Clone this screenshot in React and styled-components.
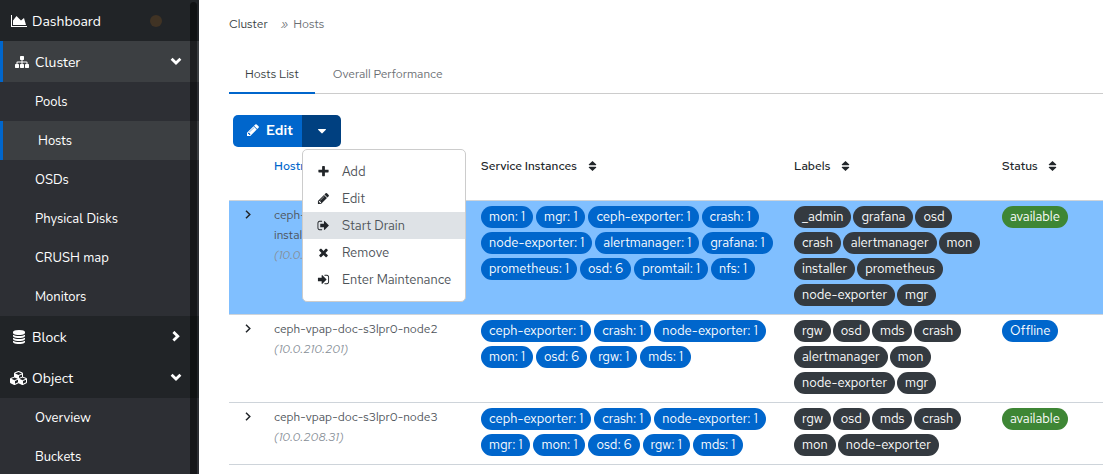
import styled, { createGlobalStyle } from 'styled-components';

const GlobalStyle = createGlobalStyle`
  * {
    box-sizing: border-box;
  }

  body {
    margin: 0;
    background: #fff;
    color: #212529;
    font-family: 'Red Hat Text', Lato, 'Open Sans', sans-serif;
    font-size: 13px;
    line-height: 20px;
    overflow: hidden;
  }

  button {
    border: 0;
    padding: 0;
    background: none;
    color: inherit;
    font: inherit;
    cursor: pointer;
  }

  a {
    color: inherit;
    text-decoration: none;
  }
`;

const icons = {
  area: [2048, 'M2048 1536v128H0V128h128v1408h1920zm-384-1024l256 896H256V832l448-576 576 576z'],
  sitemap: [1792, 'M1792 1248v320q0 40-28 68t-68 28h-320q-40 0-68-28t-28-68v-320q0-40 28-68t68-28h96v-192h-512v192h96q40 0 68 28t28 68v320q0 40-28 68t-68 28h-320q-40 0-68-28t-28-68v-320q0-40 28-68t68-28h96v-192h-512v192h96q40 0 68 28t28 68v320q0 40-28 68t-68 28h-320q-40 0-68-28t-28-68v-320q0-40 28-68t68-28h96v-192q0-52 38-90t90-38h512v-192h-96q-40 0-68-28t-28-68v-320q0-40 28-68t68-28h320q40 0 68 28t28 68v320q0 40-28 68t-68 28h-96v192h512q52 0 90 38t38 90v192h96q40 0 68 28t28 68z'],
  database: [1792, 'M896 768q237 0 443-43t325-127v170q0 69-103 128t-280 93.5-385 34.5-385-34.5-280-93.5-103-128v-170q119 84 325 127t443 43zm0 768q237 0 443-43t325-127v170q0 69-103 128t-280 93.5-385 34.5-385-34.5-280-93.5-103-128v-170q119 84 325 127t443 43zm0-384q237 0 443-43t325-127v170q0 69-103 128t-280 93.5-385 34.5-385-34.5-280-93.5-103-128v-170q119 84 325 127t443 43zm0-1152q208 0 385 34.5t280 93.5 103 128v128q0 69-103 128t-280 93.5-385 34.5-385-34.5-280-93.5-103-128v-128q0-69 103-128t280-93.5 385-34.5z'],
  cubes: [2304, 'M640 1632l384-192v-314l-384 164v342zm-64-454l404-173-404-173-404 173zm1088 454l384-192v-314l-384 164v342zm-64-454l404-173-404-173-404 173zm-448-293l384-165v-266l-384 164v267zm-64-379l441-189-441-189-441 189zm1088 518v416q0 36-19 67t-52 47l-448 224q-25 14-57 14t-57-14l-448-224q-4-2-7-4-2 2-7 4l-448 224q-25 14-57 14t-57-14l-448-224q-33-16-52-47t-19-67v-416q0-38 21.5-70t56.5-48l434-186v-400q0-38 21.5-70t56.5-48l448-192q23-10 50-10t50 10l448 192q35 16 56.5 48t21.5 70v400l434 186q36 16 57 48t21 70z'],
  pencil: [1792, 'M491 1536l91-91-235-235-91 91v107h128v128h107zm523-928q0-22-22-22-10 0-17 7l-542 542q-7 7-7 17 0 22 22 22 10 0 17-7l542-542q7-7 7-17zm-54-192l416 416-832 832h-416v-416zm683 96q0 53-37 90l-166 166-416-416 166-165q36-38 90-38 53 0 91 38l235 234q37 39 37 91z'],
  plus: [1792, 'M1600 736v192q0 40-28 68t-68 28h-416v416q0 40-28 68t-68 28h-192q-40 0-68-28t-28-68v-416h-416q-40 0-68-28t-28-68v-192q0-40 28-68t68-28h416v-416q0-40 28-68t68-28h192q40 0 68 28t28 68v416h416q40 0 68 28t28 68z'],
  times: [1792, 'M1490 1322q0 40-28 68l-136 136q-28 28-68 28t-68-28l-294-294-294 294q-28 28-68 28t-68-28l-136-136q-28-28-28-68t28-68l294-294-294-294q-28-28-28-68t28-68l136-136q28-28 68-28t68 28l294 294 294-294q28-28 68-28t68 28l136 136q28 28 28 68t-28 68l-294 294 294 294q28 28 28 68z'],
  signOut: [1792, 'M704 1440q0 4 1 20t.5 26.5-3 23.5-10 19.5-20.5 6.5h-320q-119 0-203.5-84.5t-84.5-203.5v-704q0-119 84.5-203.5t203.5-84.5h320q13 0 22.5 9.5t9.5 22.5q0 4 1 20t.5 26.5-3 23.5-10 19.5-20.5 6.5h-320q-66 0-113 47t-47 113v704q0 66 47 113t113 47h312l11.5 1 11.5 3 8 5.5 7 9 2 13.5zm928-544q0 26-19 45l-544 544q-19 19-45 19t-45-19-19-45v-288h-448q-26 0-45-19t-19-45v-384q0-26 19-45t45-19h448v-288q0-26 19-45t45-19 45 19l544 544q19 19 19 45z'],
  signIn: [1792, 'M1312 896q0 26-19 45l-544 544q-19 19-45 19t-45-19-19-45v-288h-448q-26 0-45-19t-19-45v-384q0-26 19-45t45-19h448v-288q0-26 19-45t45-19 45 19l544 544q19 19 19 45zm352-352v704q0 119-84.5 203.5t-203.5 84.5h-320q-13 0-22.5-9.5t-9.5-22.5q0-4-1-20t-.5-26.5 3-23.5 10-19.5 20.5-6.5h320q66 0 113-47t47-113v-704q0-66-47-113t-113-47h-312l-11.5-1-11.5-3-8-5.5-7-9-2-13.5q0-4-1-20t-.5-26.5 3-23.5 10-19.5 20.5-6.5h320q119 0 203.5 84.5t84.5 203.5z'],
  caret: [1792, 'M1408 704q0 26-19 45l-448 448q-19 19-45 19t-45-19l-448-448q-19-19-19-45t19-45 45-19h896q26 0 45 19t19 45z'],
};

function Icon({ name, size = 14 }) {
  const [width, path] = icons[name];
  return (
    <svg
      width={(width / 1792) * size}
      height={size}
      viewBox={`0 0 ${width} 1792`}
      fill='currentColor'
      aria-hidden='true'
    >
      <path d={path} />
    </svg>
  );
}

function Chevron({ direction }) {
  return (
    <svg width='12' height='12' viewBox='0 0 12 12' fill='none' stroke='currentColor' strokeWidth='2.8' aria-hidden='true'>
      <path d={direction === 'down' ? 'M1.6 2.8 6 7 10.4 2.8' : 'M3.4.9 7.8 5.2 3.4 9.6'} />
    </svg>
  );
}

const StyledPage = styled.div`
  display: flex;
  height: 100vh;
`;

const StyledSidebar = styled.nav`
  position: relative;
  flex: 0 0 199px;
  overflow: hidden;
  background: #2d2f34;
  color: #fff;
  font-family: Nunito, 'Noto Sans', sans-serif;
`;

const StyledScrollbar = styled.div`
  position: absolute;
  top: 2px;
  right: 2px;
  bottom: 0;
  width: 7px;
  border-radius: 4px 4px 0 0;
  background: rgba(0, 0, 0, 0.5);
`;

const StyledNavItem = styled.a`
  display: flex;
  align-items: center;
  gap: 4px;
  height: 41px;
  padding: 1px 17px 0 10px;
  border-left: ${({ $active }) => ($active ? '3px solid #06c' : '0')};
  background: ${({ $active }) => ($active ? '#3c3f42' : '#212427')};
  font-size: 14px;
`;

const StyledNavIcon = styled.span`
  display: flex;
  justify-content: center;
  width: 18px;
`;

const StyledNavName = styled.span`
  flex: 1;
  padding-top: 2px;
`;

const StyledHealth = styled.span`
  width: 12px;
  height: 12px;
  margin-right: 20px;
  border-radius: 50%;
  background: #403324;
`;

const StyledSubItem = styled.a`
  display: flex;
  align-items: center;
  height: 39px;
  padding-left: 35px;
  border-left: ${({ $active }) => ($active ? '3px solid #06c' : '0')};
  background: ${({ $active }) => ($active ? '#3c3f42' : 'transparent')};
  font-size: 13px;
`;

const StyledMain = styled.main`
  flex: 1;
  min-width: 0;
  padding: 14px 0 0 30px;
`;

const StyledBreadcrumb = styled.nav`
  display: flex;
  gap: 13px;
  color: #6a6e73;
  font-size: 12px;

  a {
    color: #393f44;
  }

  span {
    display: flex;
    gap: 5px;
  }
`;

const StyledTabs = styled.div`
  display: flex;
  gap: 2px;
  margin-top: 20px;
  border-bottom: 1px solid #ccc;
`;

const StyledTab = styled.button`
  height: 40px;
  margin-bottom: -1px;
  padding: 2px 16px 0;
  border-bottom: 2px solid ${({ $active }) => ($active ? '#06c' : 'transparent')};
  color: ${({ $active }) => ($active ? '#393f44' : '#6a6e73')};
  font-size: 12px;
`;

const StyledToolbar = styled.div`
  position: relative;
  display: flex;
  padding: 21px 0 0 4px;
`;

const StyledEditButton = styled.button`
  display: flex;
  align-items: center;
  justify-content: center;
  gap: 6px;
  width: 69px;
  height: 32px;
  padding: 0 0 2px 4px;
  border-radius: 5px 0 0 5px;
  background: #06c;
  color: #fff;
  font-size: 14px;
  font-weight: 600;
`;

const StyledCaretButton = styled.button`
  display: flex;
  align-items: center;
  justify-content: center;
  width: 39px;
  height: 32px;
  border-radius: 0 5px 5px 0;
  background: #004080;
  color: #fff;
`;

const StyledMenu = styled.div`
  position: absolute;
  z-index: 1;
  top: 55px;
  left: 73px;
  width: 164px;
  padding: 8px 0;
  border: 1px solid #ccc;
  border-radius: 5px;
  background: #fff;
`;

const StyledMenuItem = styled.button`
  display: flex;
  align-items: center;
  gap: 12px;
  width: 100%;
  height: 27px;
  padding-left: 14px;
  background: ${({ $active }) => ($active ? '#dee2e6' : 'transparent')};
  color: #212529;

  span {
    color: #4d5258;
  }
`;

const StyledTable = styled.table`
  width: 100%;
  table-layout: fixed;
  border-collapse: collapse;
`;

const StyledHead = styled.th`
  width: ${({ $width }) => $width};
  height: 53px;
  padding: 9px 0 0 8px;
  color: ${({ $sorted }) => ($sorted ? '#06c' : '#212529')};
  font-size: 12px;
  font-weight: 500;
  text-align: left;
  vertical-align: top;

  svg {
    margin-left: 8px;
    vertical-align: -1px;
  }
`;

const StyledRow = styled.tr`
  border-top: 1px solid #ced4da;
  border-bottom: 1px solid #ced4da;
  background: ${({ $selected }) => ($selected ? '#80bfff' : '#fff')};
`;

const StyledCell = styled.td`
  padding: 4px 10px 8px 8px;
  color: #4d5258;
  font-size: 12px;
  vertical-align: top;

  em {
    display: block;
    color: #868e96;
  }
`;

const StyledExpand = styled.button`
  display: flex;
  align-items: center;
  height: 20px;
  padding-left: 8px;
  color: #212529;
`;

const StyledBadges = styled.div`
  display: flex;
  flex-wrap: wrap;
  gap: 4px ${({ $gap }) => $gap}px;
  padding-top: 1px;
`;

const StyledBadge = styled.span`
  height: 22px;
  padding: 0 8px;
  border-radius: 11px;
  background: ${({ $color }) => $color};
  color: #fff;
  font-size: 13px;
  line-height: 21px;
  white-space: nowrap;
`;

const BLUE = '#06c';
const GREEN = '#3e8635';
const DARK = '#343a40';

const clusterItems = ['Pools', 'Hosts', 'OSDs', 'Physical Disks', 'CRUSH map', 'Monitors'];
const objectItems = ['Overview', 'Buckets'];

const actions = [
  { icon: 'plus', name: 'Add' },
  { icon: 'pencil', name: 'Edit' },
  { icon: 'signOut', name: 'Start Drain' },
  { icon: 'times', name: 'Remove' },
  { icon: 'signIn', name: 'Enter Maintenance' },
];

const hosts = [
  {
    name: 'ceph-vpap-doc-s3lpr0-node1-installer',
    address: '10.0.210.60',
    services: ['mon: 1', 'mgr: 1', 'ceph-exporter: 1', 'crash: 1', 'node-exporter: 1', 'alertmanager: 1', 'grafana: 1', 'prometheus: 1', 'osd: 6', 'promtail: 1', 'nfs: 1'],
    labels: ['_admin', 'grafana', 'osd', 'crash', 'alertmanager', 'mon', 'installer', 'prometheus', 'node-exporter', 'mgr'],
    status: 'available',
  },
  {
    name: 'ceph-vpap-doc-s3lpr0-node2',
    address: '10.0.210.201',
    services: ['ceph-exporter: 1', 'crash: 1', 'node-exporter: 1', 'mon: 1', 'osd: 6', 'rgw: 1', 'mds: 1'],
    labels: ['rgw', 'osd', 'mds', 'crash', 'alertmanager', 'mon', 'node-exporter', 'mgr'],
    status: 'Offline',
  },
  {
    name: 'ceph-vpap-doc-s3lpr0-node3',
    address: '10.0.208.31',
    services: ['ceph-exporter: 1', 'crash: 1', 'node-exporter: 1', 'mgr: 1', 'mon: 1', 'osd: 6', 'rgw: 1', 'mds: 1'],
    labels: ['rgw', 'osd', 'mds', 'crash', 'mon', 'node-exporter'],
    status: 'available',
  },
];

function NavItem({ icon, name, active, arrow, children }) {
  return (
    <StyledNavItem href='#' $active={active}>
      <StyledNavIcon><Icon name={icon} /></StyledNavIcon>
      <StyledNavName>{name}</StyledNavName>
      {children}
      {arrow && <Chevron direction={arrow} />}
    </StyledNavItem>
  );
}

function SortIcon() {
  return (
    <svg width='9' height='10' viewBox='0 0 9 10' fill='currentColor' aria-hidden='true'>
      <path d='M4.5 0 8.3 3.5Q8.3 4.2 7.6 4.2H1.4Q.7 4.2.7 3.5ZM4.5 10 8.3 6.5Q8.3 5.8 7.6 5.8H1.4Q.7 5.8.7 6.5Z' />
    </svg>
  );
}

function Badges({ items, color, gap }) {
  return (
    <StyledBadges $gap={gap}>
      {items.map(item => <StyledBadge key={item} $color={color}>{item}</StyledBadge>)}
    </StyledBadges>
  );
}

function Sidebar() {
  return (
    <StyledSidebar>
      <NavItem icon='area' name='Dashboard'><StyledHealth /></NavItem>
      <NavItem icon='sitemap' name='Cluster' arrow='down' active />
      {clusterItems.map(item => (
        <StyledSubItem href='#' key={item} $active={item === 'Hosts'}>{item}</StyledSubItem>
      ))}
      <NavItem icon='database' name='Block' arrow='right' />
      <NavItem icon='cubes' name='Object' arrow='down' />
      {objectItems.map(item => (
        <StyledSubItem href='#' key={item}>{item}</StyledSubItem>
      ))}
      <StyledScrollbar />
    </StyledSidebar>
  );
}

function HostsTable() {
  return (
    <StyledTable>
      <thead>
        <tr>
          <StyledHead $width='37px' aria-label='Expand' />
          <StyledHead $width='207px' $sorted>Hostname</StyledHead>
          <StyledHead $width='313px'>Service Instances <SortIcon /></StyledHead>
          <StyledHead $width='208px'>Labels <SortIcon /></StyledHead>
          <StyledHead>Status <SortIcon /></StyledHead>
        </tr>
      </thead>
      <tbody>
        {hosts.map((host, i) => (
          <StyledRow key={host.name} $selected={i === 0}>
            <StyledCell>
              <StyledExpand aria-label={`Expand ${host.name}`}>
                <svg width='6' height='9' viewBox='0 0 6 9' fill='none' stroke='currentColor' strokeWidth='1.5'>
                  <path d='M1 .7 4.8 4.5 1 8.3' />
                </svg>
              </StyledExpand>
            </StyledCell>
            <StyledCell>
              {host.name}
              <em>({host.address})</em>
            </StyledCell>
            <StyledCell><Badges items={host.services} color={BLUE} gap={3} /></StyledCell>
            <StyledCell><Badges items={host.labels} color={DARK} gap={2} /></StyledCell>
            <StyledCell>
              <Badges items={[host.status]} color={host.status === 'Offline' ? BLUE : GREEN} gap={3} />
            </StyledCell>
          </StyledRow>
        ))}
      </tbody>
    </StyledTable>
  );
}

export default function App() {
  return (
    <StyledPage>
      <GlobalStyle />
      <Sidebar />
      <StyledMain>
        <StyledBreadcrumb aria-label='Breadcrumb'>
          <a href='#'>Cluster</a>
          <span><i>»</i> Hosts</span>
        </StyledBreadcrumb>
        <StyledTabs role='tablist'>
          <StyledTab role='tab' aria-selected='true' $active>Hosts List</StyledTab>
          <StyledTab role='tab' aria-selected='false'>Overall Performance</StyledTab>
        </StyledTabs>
        <StyledToolbar>
          <StyledEditButton><Icon name='pencil' /> Edit</StyledEditButton>
          <StyledCaretButton aria-label='More actions'><Icon name='caret' /></StyledCaretButton>
          <StyledMenu>
            {actions.map(({ icon, name }) => (
              <StyledMenuItem key={name} $active={name === 'Start Drain'}>
                <Icon name={icon} size={13} />
                <span>{name}</span>
              </StyledMenuItem>
            ))}
          </StyledMenu>
        </StyledToolbar>
        <HostsTable />
      </StyledMain>
    </StyledPage>
  );
}
